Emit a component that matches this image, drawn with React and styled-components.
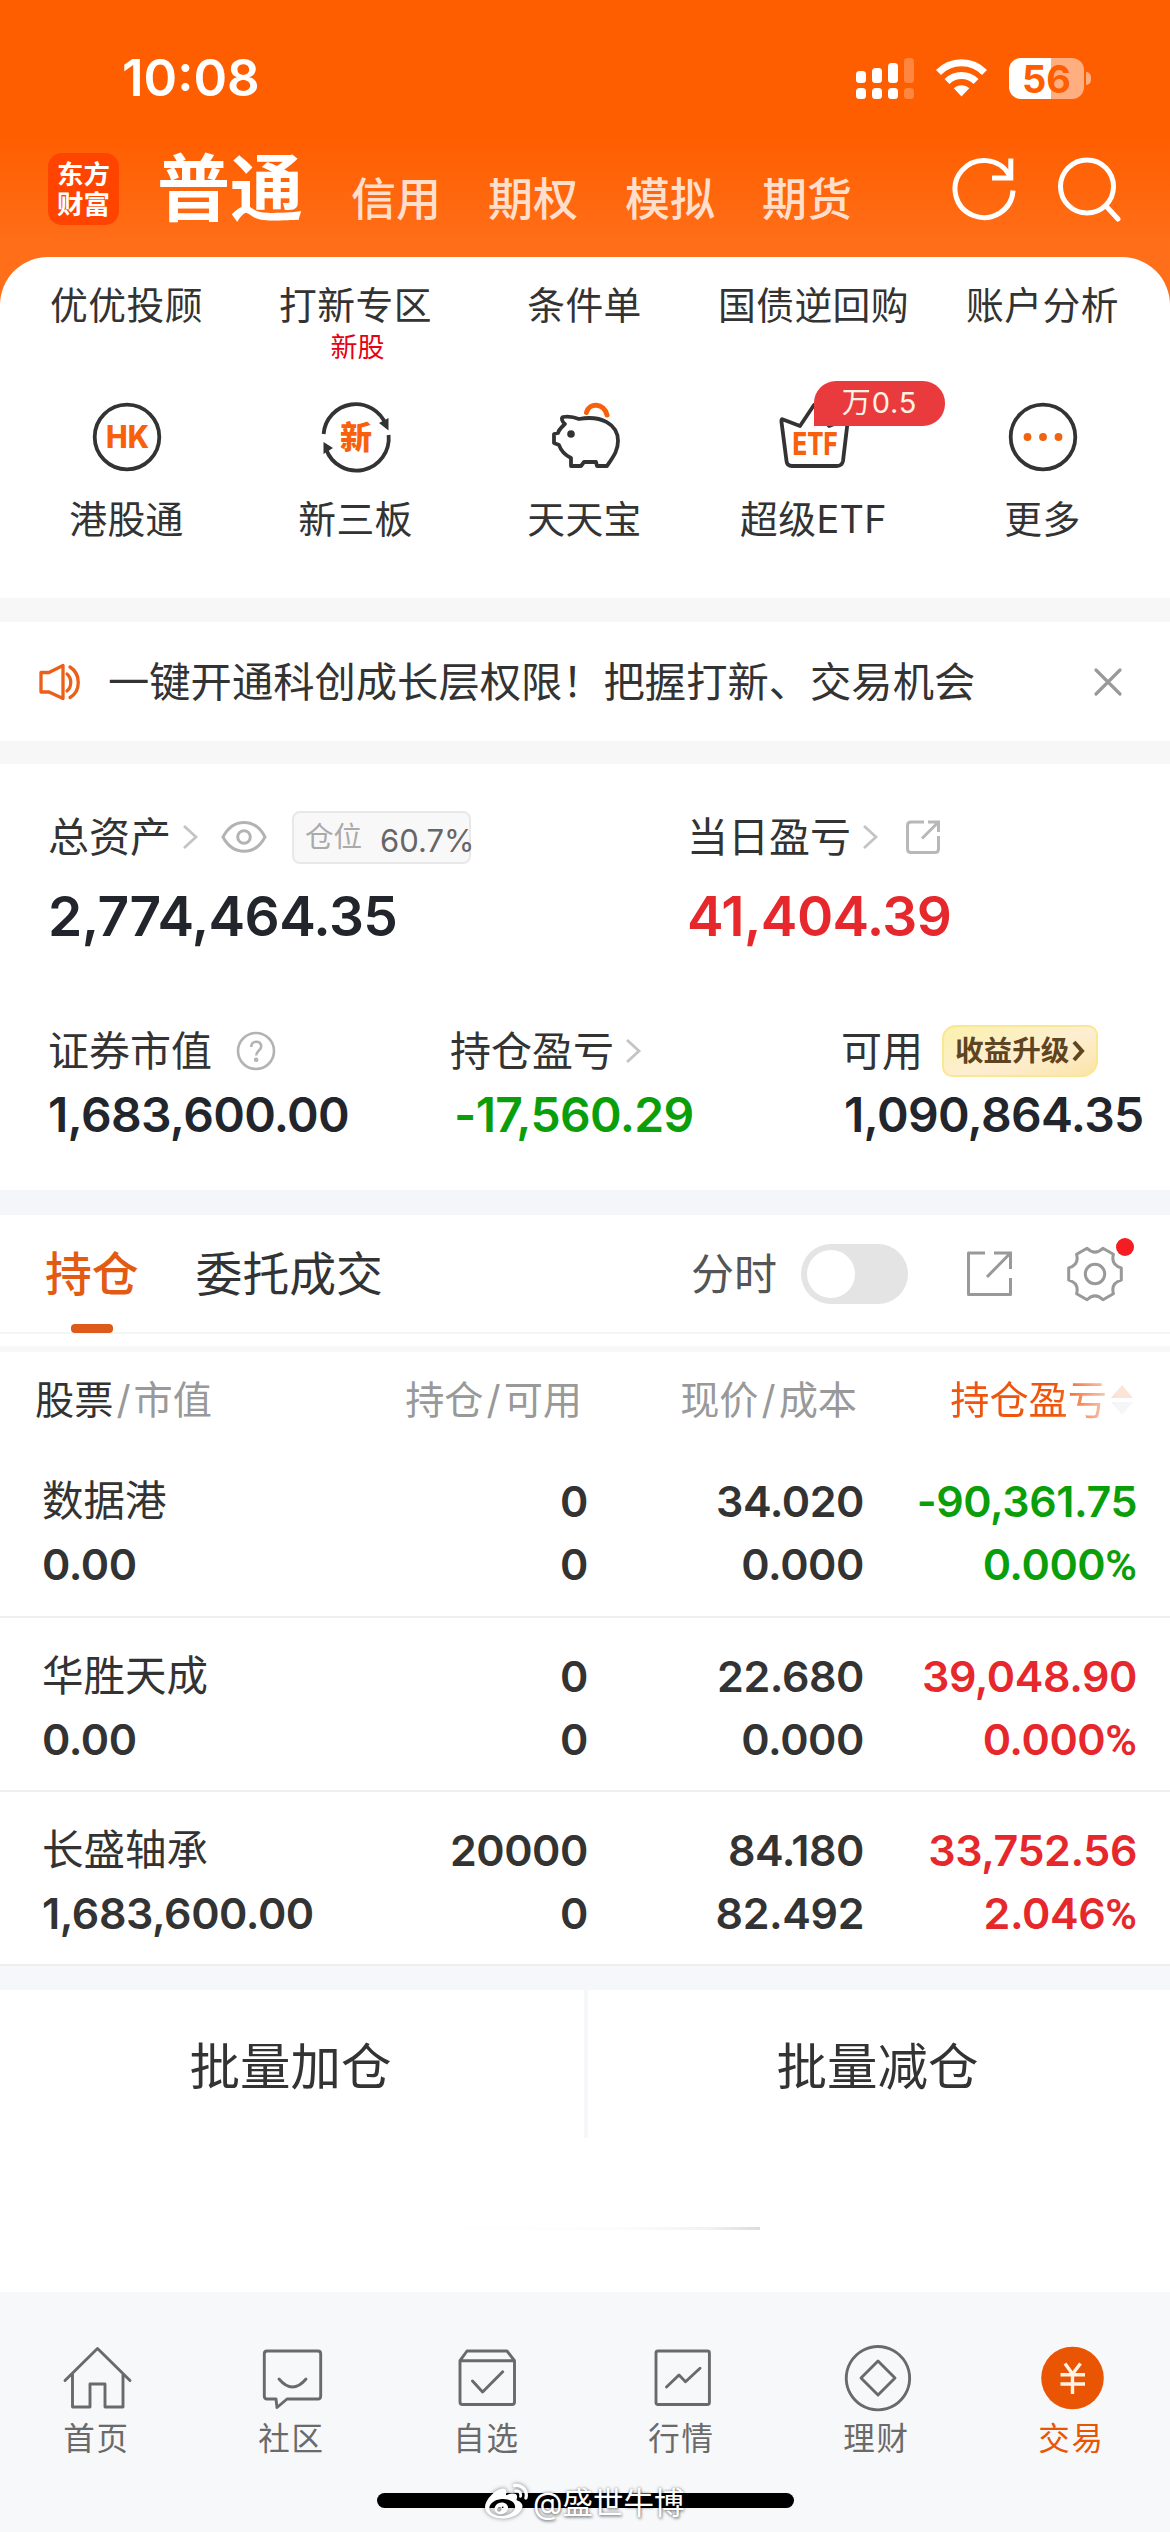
import React, { useState } from "react";
import styled, { createGlobalStyle } from "styled-components";
import { FaWeibo } from "react-icons/fa";

const GlobalStyle = createGlobalStyle`
  * {
    box-sizing: border-box;
  }
  body {
    margin: 0;
    background: #fff;
    color: #333;
    font-family: Inter, "Noto Sans CJK SC", sans-serif;
  }
  svg {
    display: block;
    flex-shrink: 0;
  }
`;

const Page = styled.div`
  position: relative;
  width: 1170px;
  height: 2532px;
  display: flex;
  flex-direction: column;
  overflow: hidden;
`;

const Top = styled.div`
  background: linear-gradient(#ff5e00 0, #ff5e00 136px, #ff6f1a 250px, #ff6f1a 320px);
`;

const StatusBar = styled.div`
  display: flex;
  align-items: center;
  height: 140px;
  padding: 16px 86px 0 122px;
  color: #fff;
`;

const Time = styled.div`
  flex: 1;
  font-size: 51px;
  font-weight: 600;
  line-height: 60px;
`;

const StatusIcons = styled.div`
  display: flex;
  align-items: center;
  gap: 21px;
`;

const Battery = styled.div`
  position: relative;
  width: 75px;
  height: 41px;
  margin-left: 1px;
  border-radius: 12px;
  background: linear-gradient(90deg, #fff 56%, #ffae80 56%);
  color: #ff5e00;
  font-size: 38px;
  font-weight: 700;
  line-height: 42px;
  text-align: center;
  &::after {
    content: "";
    position: absolute;
    left: 77px;
    top: 14px;
    width: 5px;
    height: 13px;
    border-radius: 0 6px 6px 0;
    background: #ffae80;
  }
`;

const NavBar = styled.div`
  display: flex;
  align-items: center;
  height: 117px;
  padding: 0 49px 19px 48px;
  color: #fff;
`;

const Logo = styled.div`
  width: 71px;
  height: 72px;
  padding-top: 6px;
  border-radius: 14px;
  background: #ff4400;
  font-size: 26.5px;
  font-weight: 700;
  line-height: 30px;
  text-align: center;
`;

const NavTitle = styled.div`
  margin-left: 38px;
  font-size: 73px;
  font-weight: 700;
  line-height: 80px;
`;

const NavTabs = styled.div`
  display: flex;
  flex: 1;
  gap: 47px;
  margin-left: 48px;
  padding-top: 22px;
  font-size: 45px;
  font-weight: 500;
  line-height: 50px;
  color: #ffdfcb;
`;

const NavActions = styled.div`
  display: flex;
  gap: 39px;
`;

const Card = styled.div`
  height: 341px;
  padding: 23px 12px 0;
  border-radius: 48px 48px 0 0;
  background: #fff;
`;

const MenuRow = styled.div`
  display: grid;
  grid-template-columns: repeat(5, 229px);
  min-height: ${(props) => props.$height}px;
`;

const MenuItem = styled.div`
  position: relative;
  display: flex;
  flex-direction: column;
  align-items: center;
`;

const MenuLabel = styled.div`
  font-size: 37.8px;
  letter-spacing: 0.4px;
  line-height: 50px;
  white-space: nowrap;
`;

const MenuHint = styled.div`
  padding: 1px 0 0 4px;
  font-size: 27px;
  line-height: 34px;
  color: #e60012;
`;

const IconBox = styled.div`
  height: 102px;
  svg text {
    font-weight: 800;
    fill: #f8600c;
    text-anchor: middle;
  }
`;

const Badge = styled.div`
  position: absolute;
  left: 115px;
  top: -11px;
  width: 131px;
  height: 45px;
  border-radius: 22px 22px 22px 0;
  background: #e93b3d;
  color: #fff3e6;
  font-size: 29px;
  letter-spacing: 0.8px;
  line-height: 44px;
  text-align: center;
`;

const Gap = styled.div`
  flex-shrink: 0;
  height: ${(props) => props.$height}px;
  background: ${(props) => props.$color || "#f7f7f7"};
`;

const Notice = styled.div`
  display: flex;
  align-items: center;
  height: 119px;
  padding: 0 47px 0 38px;
  font-size: 41.3px;
  line-height: 60px;
  white-space: nowrap;
`;

const NoticeText = styled.div`
  flex: 1;
  margin-left: 24px;
`;

const Assets = styled.div`
  height: 426px;
  padding: 48px 0 0 48px;
`;

const AssetRow = styled.div`
  display: grid;
  grid-template-columns: ${(props) => props.$columns};
  height: ${(props) => props.$height}px;
`;

const AssetLabel = styled.div`
  display: flex;
  align-items: center;
  height: 50px;
  font-size: 41px;
  line-height: 50px;
  white-space: nowrap;
`;

const colors = { up: "#e6282c", down: "#0a9f0a", dark: "#22252b" };

const Amount = styled.div`
  margin-top: ${(props) => (props.$big ? 24 : 14)}px;
  padding-left: ${(props) => props.$indent || 0}px;
  font-size: ${(props) => (props.$big ? 55 : 48)}px;
  font-weight: 600;
  letter-spacing: ${(props) => (props.$big ? "-0.011em" : "-0.014em")};
  line-height: ${(props) => (props.$big ? 60 : 50)}px;
  color: ${(props) => colors[props.$tone]};
`;

const Ratio = styled.div`
  display: flex;
  align-items: center;
  width: 179px;
  height: 53px;
  margin-left: 25px;
  padding-left: 11px;
  border: 2px solid #e8e8e8;
  border-radius: 8px;
  background: #f8f8f8;
  font-size: 28.5px;
  color: #aaa;
`;

const RatioValue = styled.span`
  margin: 8px 0 0 18px;
  font-size: 31px;
  color: #666;
`;

const Upgrade = styled.div`
  display: flex;
  align-items: center;
  gap: 3px;
  height: 52px;
  margin-left: 19px;
  padding: 0 11px;
  border: 2px solid #fae793;
  border-radius: 14px 10px 16px 10px;
  background: linear-gradient(160deg, #fbf1ab, #fdeed2 55%, #fbe4a8);
  color: #5e4420;
  font-size: 28.6px;
  font-weight: 700;
`;

const TabRow = styled.div`
  display: flex;
  align-items: center;
  height: 119px;
  padding: 0 47px 0 45px;
  border-bottom: 2px solid #f5f5f5;
  line-height: 60px;
`;

const Tab = styled.div`
  position: relative;
  margin-right: 57px;
  font-size: 46.8px;
  font-weight: ${(props) => (props.$active ? 500 : 400)};
  color: ${(props) => (props.$active ? "#e35a12" : "#333")};
  cursor: pointer;
  &::after {
    content: "";
    display: ${(props) => (props.$active ? "block" : "none")};
    position: absolute;
    left: 26px;
    bottom: -29px;
    width: 42px;
    height: 9px;
    border-radius: 4px;
    background: #dd5a1a;
  }
`;

const SwitchLabel = styled.div`
  margin-left: auto;
  font-size: 43px;
  color: #555;
`;

const Switch = styled.div`
  width: 107px;
  height: 60px;
  margin: 0 58px 0 24px;
  padding: 6px;
  border-radius: 30px;
  background: #e4e4e4;
  cursor: pointer;
  &::after {
    content: "";
    display: block;
    width: 48px;
    height: 48px;
    margin-left: ${(props) => (props.$on ? 47 : 0)}px;
    border-radius: 50%;
    background: #fff;
  }
`;

const Settings = styled.div`
  position: relative;
  margin-left: 54px;
  &::after {
    content: "";
    position: absolute;
    right: -11px;
    top: -8px;
    width: 18px;
    height: 18px;
    border-radius: 50%;
    background: #f51d22;
  }
`;

const TableHead = styled.div`
  display: grid;
  grid-template-columns: 266px 281px 275px 277px;
  align-items: center;
  height: 91px;
  padding: 4px 36px 0 35px;
  font-size: 39.2px;
  line-height: 50px;
  color: #999;
  white-space: nowrap;
`;

const HeadCell = styled.div`
  text-align: right;
  &:first-child {
    text-align: left;
  }
  b {
    font-weight: 400;
    color: #333;
  }
  i {
    font-style: normal;
    margin: 0 3px;
  }
`;

const SortCell = styled.div`
  display: flex;
  align-items: center;
  justify-content: flex-end;
  gap: 3px;
  color: #ee5610;
  mask-image: linear-gradient(90deg, #000 200px, rgba(0, 0, 0, 0.18) 260px);
`;

const StockRow = styled.div`
  display: grid;
  grid-template-columns: 258px 288px 276px 273px;
  height: ${(props) => props.$height}px;
  padding: 27px 33px 0 42px;
  border-bottom: 2px solid #efefef;
  font-size: 43px;
  font-weight: 600;
  letter-spacing: -0.01em;
  line-height: 63px;
  white-space: nowrap;
`;

const StockName = styled.div`
  font-size: 41.5px;
  font-weight: 400;
  letter-spacing: 0;
`;

const StockCell = styled.div`
  text-align: right;
  color: ${(props) => colors[props.$tone] || "#333"};
  &:first-child {
    text-align: left;
  }
`;

const Percent = styled.span`
  font-family: Roboto, sans-serif;
  letter-spacing: 0;
`;

const Actions = styled.div`
  display: grid;
  grid-template-columns: 584px 586px;
  height: 148px;
`;

const Action = styled.div`
  height: 148px;
  padding-right: 3px;
  font-size: 50.5px;
  line-height: 154px;
  text-align: center;
  border-left: 4px solid #f6f7fa;
  &:first-child {
    border-left: none;
  }
`;

const Blank = styled.div`
  height: 154px;
  padding: 89px 0 0 410px;
`;

const Hairline = styled.div`
  width: 350px;
  height: 3px;
  background: linear-gradient(90deg, #fff, #fcfcfc 60%, #f2f2f2 85%, #dcdcdc);
`;

const TabBar = styled.div`
  display: grid;
  grid-template-columns: repeat(6, 195px);
  height: 240px;
  padding-top: 46px;
  background: #f7f8fa;
`;

const TabItem = styled.div`
  display: flex;
  flex-direction: column;
  align-items: center;
  color: ${(props) => (props.$active ? "#ea5504" : "#6a6a6a")};
  line-height: 42px;
`;

const TabLabel = styled.div`
  margin-right: 2px;
  font-size: 31.5px;
  letter-spacing: 1.8px;
`;

const HomeIndicator = styled.div`
  position: absolute;
  left: 377px;
  bottom: 24px;
  width: 417px;
  height: 15px;
  border-radius: 8px;
  background: #000;
`;

const Watermark = styled.div`
  position: absolute;
  left: 485px;
  bottom: 8px;
  display: flex;
  align-items: center;
  gap: 5px;
  color: #fff;
  font-size: 30.5px;
  line-height: 40px;
  text-shadow: 0 0 3px rgba(0, 0, 0, 0.55), 1px 2px 3px rgba(0, 0, 0, 0.3);
  svg {
    filter: drop-shadow(0 0 2px rgba(0, 0, 0, 0.5));
  }
`;

const Signal = () => (
  <svg width="59" height="41" viewBox="0 0 59 41" fill="#fff">
    <rect x="0" y="13" width="10" height="12" rx="3.5" />
    <rect x="16" y="10" width="10" height="15" rx="3.5" />
    <rect x="32" y="5" width="10" height="20" rx="3.5" />
    <rect x="48" y="0" width="10" height="25" rx="3.5" opacity="0.25" />
    <rect x="0" y="30" width="10" height="11" rx="3.5" />
    <rect x="16" y="30" width="10" height="11" rx="3.5" />
    <rect x="32" y="30" width="10" height="11" rx="3.5" />
    <rect x="48" y="30" width="10" height="11" rx="3.5" opacity="0.25" />
  </svg>
);

const Wifi = () => (
  <svg width="51" height="38" viewBox="0 0 51 38" fill="none" stroke="#fff" strokeWidth="7">
    <path d="M2.5 13.5 C15 0.5 36 0.5 48.5 13.5" />
    <path d="M11 22.5 C19 14.5 32 14.5 40 22.5" />
    <path d="M25.5 37.5 L17.8 29.2 C22 25.2 29 25.2 33.2 29.2 Z" fill="#fff" stroke="none" />
  </svg>
);

const Refresh = () => (
  <svg width="66" height="66" viewBox="0 0 66 66" fill="none" stroke="#fff" strokeWidth="5">
    <path d="M61 34.5 A29 28.5 0 1 1 57 18.5 L58.5 22" />
    <path d="M58.8 2.5 V22 H40" />
  </svg>
);

const Search = () => (
  <svg width="64" height="66" viewBox="0 0 64 66" fill="none" stroke="#fff" strokeWidth="5">
    <ellipse cx="30" cy="30.5" rx="26.5" ry="26.5" />
    <path d="M49 50 L61 63" strokeLinecap="round" />
  </svg>
);

const HkIcon = () => (
  <svg width="90" height="90" viewBox="0 0 90 90">
    <circle cx="45" cy="45" r="32.3" fill="none" stroke="#333" strokeWidth="3.8" />
    <text x="45.5" y="56.3" fontSize="31" textLength="43" lengthAdjust="spacingAndGlyphs">HK</text>
  </svg>
);

const NewBoardIcon = () => (
  <svg width="90" height="90" viewBox="0 0 90 90">
    <g fill="none" stroke="#333" strokeWidth="3.8">
      <path d="M12.6 42 A32.3 32.3 0 0 1 75 33" />
      <path d="M77.6 43 A32.3 32.3 0 0 1 15 57" />
    </g>
    <path d="M77.5 26 V38.5 L68 31 Z M12.5 50 V62 L22 56 Z" fill="#333" />
    <text x="45" y="56.5" fontSize="32">新</text>
  </svg>
);

const PigIcon = () => (
  <svg width="90" height="90" viewBox="-1 2 90 90" fill="none" stroke="#333" strokeWidth="3.8" strokeLinejoin="round">
    <path d="M22 27 C28 26 33 27 38 29 C60 25 77 34 77 51 C77 61 72 67 66 76 H56 L55 72 H43 L40 76 H30 V68 C24 65 20 61 18 55 L13 53 V44 L17 43 C18 39 21 37 24 34 C21 32 20 28 22 27 Z" />
    <circle cx="30" cy="44" r="3.8" fill="#333" stroke="none" />
    <path d="M45.5 22.5 C48 12.5 63 12.5 66 25" stroke="#f8600c" strokeWidth="5" strokeLinecap="round" />
  </svg>
);

const EtfIcon = () => (
  <svg width="90" height="90" viewBox="0 0 90 90">
    <path
      d="M14 27.5 L31 34 L45 13 L60 34 L79 27 L74 69 Q73 74 68 74 H23 Q18 74 17.5 69 L12.5 30 Q12 26.5 14 27.5 Z"
      fill="none"
      stroke="#333"
      strokeWidth="3.8"
      strokeLinejoin="round"
    />
    <text x="46" y="63" fontSize="31" textLength="45" lengthAdjust="spacingAndGlyphs">ETF</text>
  </svg>
);

const MoreIcon = () => (
  <svg width="90" height="90" viewBox="0 0 90 90">
    <circle cx="45" cy="45" r="32.3" fill="none" stroke="#333" strokeWidth="3.8" />
    <g fill="#f0640f">
      <circle cx="29.5" cy="45" r="3.9" />
      <circle cx="45" cy="45" r="3.9" />
      <circle cx="60.5" cy="45" r="3.9" />
    </g>
  </svg>
);

const Speaker = () => (
  <svg width="46" height="42" viewBox="0 0 46 42" fill="none" stroke="#ec5f17" strokeWidth="3.3" strokeLinejoin="round">
    <path d="M3 11.5 H11 L25 4.5 V37.5 L11 31 H3 Z" />
    <path d="M29 13 C34 17 34 26 29 30" strokeLinecap="round" />
    <path d="M32 6 C43 13 43 30 32 36.5" strokeLinecap="round" />
  </svg>
);

const Close = () => (
  <svg width="30" height="30" viewBox="0 0 30 30" stroke="#999" strokeWidth="3.2" strokeLinecap="round">
    <path d="M3 3 L27 27 M27 3 L3 27" />
  </svg>
);

const ChevronSvg = styled.svg`
  margin-left: 11px;
`;

const Chevron = () => (
  <ChevronSvg width="17" height="26" viewBox="0 0 17 26" fill="none" stroke="#c4c4c4" strokeWidth="2.8">
    <path d="M2 2 L14 13 L2 24" />
  </ChevronSvg>
);

const LabelIcon = styled.svg`
  margin-left: ${(props) => props.$left}px;
`;

const Eye = () => (
  <LabelIcon $left={22} width="46" height="34" viewBox="0 0 46 34" fill="none" stroke="#b3b3b3" strokeWidth="3">
    <path d="M2 17 C12 -2.5 34 -2.5 44 17 C34 36 12 36 2 17 Z" />
    <circle cx="23" cy="17" r="6.3" />
  </LabelIcon>
);

const ShareSmall = () => (
  <LabelIcon $left={26} width="36" height="36" viewBox="0 0 36 36" fill="none" stroke="#b8b8b8" strokeWidth="3">
    <path d="M19 3 H6 Q2.5 3 2.5 6.5 V30 Q2.5 33.5 6 33.5 H30 Q33.5 33.5 33.5 30 V17" />
    <path d="M23 3 H33.5 V13 M33 3.5 L17 19.5" />
  </LabelIcon>
);

const Share = () => (
  <svg width="47" height="47" viewBox="0 0 47 47" fill="none" stroke="#999" strokeWidth="3">
    <path d="M19 3 H2.5 V44.5 H44.5 V28" strokeLinejoin="round" />
    <path d="M28 3 H44.5 V19 M44 3.5 L21 27" />
  </svg>
);

const Help = () => (
  <LabelIcon $left={24} width="40" height="40" viewBox="0 0 40 40" fill="none" stroke="#b3b3b3" strokeWidth="2.6">
    <circle cx="20" cy="20" r="18" />
    <path d="M15.2 16 C15.2 9 25.2 9 25.2 15.5 C25.2 19.5 20.2 19.5 20.2 24.5" />
    <circle cx="20.2" cy="28.8" r="1" />
  </LabelIcon>
);

// six rounded teeth around a centre of 30,30
const gearPath = () => {
  const at = (r, deg) => {
    const a = (deg * Math.PI) / 180;
    return `${(30 + r * Math.cos(a)).toFixed(1)} ${(30 + r * Math.sin(a)).toFixed(1)}`;
  };
  let d = `M${at(27, -13)}`;
  for (let k = 0; k < 6; k++) {
    const t = k * 60;
    d += ` L${at(27, t + 13)} Q${at(18, t + 30)} ${at(27, t + 47)}`;
  }
  return d + " Z";
};

const Gear = () => (
  <svg width="56" height="56" viewBox="2 2 56 56" fill="none" stroke="#999" strokeWidth="3" strokeLinejoin="round">
    <path d={gearPath()} />
    <circle cx="30" cy="30" r="9.7" />
  </svg>
);

const SortArrows = () => (
  <svg width="24" height="32" viewBox="0 0 24 32">
    <path d="M12 1 L23 14 H1 Z" fill="#f06a2a" />
    <path d="M12 31 L23 18 H1 Z" fill="#c9ccd2" />
  </svg>
);

const MiniChevron = () => (
  <svg width="13" height="22" viewBox="0 0 13 22" fill="none" stroke="#5e4420" strokeWidth="4">
    <path d="M2 2 L10 11 L2 20" />
  </svg>
);

const TabIcon = ({ children }) => (
  <svg
    width="80"
    height="80"
    viewBox="0 0 80 80"
    fill="none"
    stroke="currentColor"
    strokeWidth="2.9"
    strokeLinejoin="round"
    strokeLinecap="round"
  >
    {children}
  </svg>
);

const services = ["优优投顾", "打新专区", "条件单", "国债逆回购", "账户分析"];

const tools = [
  { label: "港股通", icon: <HkIcon /> },
  { label: "新三板", icon: <NewBoardIcon /> },
  { label: "天天宝", icon: <PigIcon /> },
  { label: "超级ETF", icon: <EtfIcon />, badge: "万0.5" },
  { label: "更多", icon: <MoreIcon /> },
];

const stocks = [
  { name: "数据港", value: "0.00", hold: "0", usable: "0", price: "34.020", cost: "0.000", profit: "-90,361.75", rate: "0.000", tone: "down", height: 175 },
  { name: "华胜天成", value: "0.00", hold: "0", usable: "0", price: "22.680", cost: "0.000", profit: "39,048.90", rate: "0.000", tone: "up", height: 174 },
  { name: "长盛轴承", value: "1,683,600.00", hold: "20000", usable: "0", price: "84.180", cost: "82.492", profit: "33,752.56", rate: "2.046", tone: "up", height: 174 },
];

const tabs = [
  {
    label: "首页",
    icon: <path d="M7 42.5 L39.5 10.5 L72 42.5 M14.5 36 V69 H32 V46 H47 V69 H65 V36" />,
  },
  {
    label: "社区",
    icon: <path d="M14 13 H65 Q67.7 13 67.7 16 V58 Q67.7 61 65 61 H34 L24 69.5 L23 61 H14 Q11.3 61 11.3 58 V16 Q11.3 13 14 13 Z M26 41 Q39.5 57 53 41" />,
  },
  {
    label: "自选",
    icon: <path d="M12 22.7 L19 13 H59 L66.5 22.7 V64 Q66.5 66.5 64 66.5 H14.5 Q12 66.5 12 64 Z H66.5 M24.5 43 L34.6 54 L54.7 33.7" />,
  },
  {
    label: "行情",
    icon: <path d="M15 13 H64.4 Q66.4 13 66.4 15 V64.5 Q66.4 66.5 64.4 66.5 H15 Q13 66.5 13 64.5 V15 Q13 13 15 13 Z M23.5 49 L36 37 L42.5 43.7 L57 30.3" />,
  },
  {
    label: "理财",
    icon: <path d="M40 8.5 A31.7 31.7 0 1 1 39.9 8.5 Z M40 23 L57 40 L40 57 L23 40 Z" />,
  },
  {
    label: "交易",
    active: true,
    icon: (
      <>
        <circle cx="39.5" cy="40" r="31.3" fill="#ea5504" stroke="none" />
        <path d="M32 25.5 L39.5 36 L47.5 25.5 M39.5 36 V56 M27.5 36.7 H52 M27.5 46 H52" stroke="#fff3e6" strokeWidth="3.4" strokeLinecap="butt" />
      </>
    ),
  },
];

const App = () => {
  const [activeTab, setActiveTab] = useState("持仓");
  const [minuteChart, setMinuteChart] = useState(false);

  return (
    <Page>
      <GlobalStyle />
      <Top>
        <StatusBar>
          <Time>10:08</Time>
          <StatusIcons>
            <Signal />
            <Wifi />
            <Battery>56</Battery>
          </StatusIcons>
        </StatusBar>
        <NavBar>
          <Logo>东方<br />财富</Logo>
          <NavTitle>普通</NavTitle>
          <NavTabs>
            <span>信用</span>
            <span>期权</span>
            <span>模拟</span>
            <span>期货</span>
          </NavTabs>
          <NavActions>
            <Refresh />
            <Search />
          </NavActions>
        </NavBar>
        <Card>
          <MenuRow $height={112}>
            {services.map((label) => (
              <MenuItem key={label}>
                <MenuLabel>{label}</MenuLabel>
                {label === "打新专区" && <MenuHint>新股</MenuHint>}
              </MenuItem>
            ))}
          </MenuRow>
          <MenuRow $height={152}>
            {tools.map((tool) => (
              <MenuItem key={tool.label}>
                <IconBox>{tool.icon}</IconBox>
                <MenuLabel>{tool.label}</MenuLabel>
                {tool.badge && <Badge>{tool.badge}</Badge>}
              </MenuItem>
            ))}
          </MenuRow>
        </Card>
      </Top>

      <Gap $height={24} />
      <Notice>
        <Speaker />
        <NoticeText>一键开通科创成长层权限！把握打新、交易机会</NoticeText>
        <Close />
      </Notice>
      <Gap $height={23} />

      <Assets>
        <AssetRow $columns="639px 1fr" $height={214}>
          <div>
            <AssetLabel>
              总资产
              <Chevron />
              <Eye />
              <Ratio>
                仓位<RatioValue>60.7%</RatioValue>
              </Ratio>
            </AssetLabel>
            <Amount $big $tone="dark">2,774,464.35</Amount>
          </div>
          <div>
            <AssetLabel>
              当日盈亏
              <Chevron />
              <ShareSmall />
            </AssetLabel>
            <Amount $big $tone="up">41,404.39</Amount>
          </div>
        </AssetRow>
        <AssetRow $columns="402px 391px 1fr" $height={164}>
          <div>
            <AssetLabel>
              证券市值
              <Help />
            </AssetLabel>
            <Amount $tone="dark">1,683,600.00</Amount>
          </div>
          <div>
            <AssetLabel>
              持仓盈亏
              <Chevron />
            </AssetLabel>
            <Amount $tone="down" $indent={4}>-17,560.29</Amount>
          </div>
          <div>
            <AssetLabel>
              可用
              <Upgrade>
                收益升级
                <MiniChevron />
              </Upgrade>
            </AssetLabel>
            <Amount $tone="dark" $indent={3}>1,090,864.35</Amount>
          </div>
        </AssetRow>
      </Assets>

      <Gap $height={25} $color="#f5f6f9" />
      <TabRow>
        {["持仓", "委托成交"].map((name) => (
          <Tab key={name} $active={activeTab === name} onClick={() => setActiveTab(name)}>
            {name}
          </Tab>
        ))}
        <SwitchLabel>分时</SwitchLabel>
        <Switch $on={minuteChart} onClick={() => setMinuteChart(!minuteChart)} />
        <Share />
        <Settings>
          <Gear />
        </Settings>
      </TabRow>
      <Gap $height={12} $color="#fff" />
      <Gap $height={6} $color="#f8f8f9" />

      <TableHead>
        <HeadCell>
          <b>股票</b>
          <i>/</i>市值
        </HeadCell>
        <HeadCell>
          持仓<i>/</i>可用
        </HeadCell>
        <HeadCell>
          现价<i>/</i>成本
        </HeadCell>
        <SortCell>
          持仓盈亏
          <SortArrows />
        </SortCell>
      </TableHead>
      {stocks.map((s) => (
        <StockRow key={s.name} $height={s.height}>
          <StockCell>
            <StockName>{s.name}</StockName>
            {s.value}
          </StockCell>
          <StockCell>
            {s.hold}
            <br />
            {s.usable}
          </StockCell>
          <StockCell>
            {s.price}
            <br />
            {s.cost}
          </StockCell>
          <StockCell $tone={s.tone}>
            {s.profit}
            <br />
            {s.rate}
            <Percent>%</Percent>
          </StockCell>
        </StockRow>
      ))}
      <Gap $height={24} $color="#f6f7fa" />

      <Actions>
        <Action>批量加仓</Action>
        <Action>批量减仓</Action>
      </Actions>
      <Blank>
        <Hairline />
      </Blank>

      <TabBar>
        {tabs.map((tab) => (
          <TabItem key={tab.label} $active={tab.active}>
            <TabIcon>{tab.icon}</TabIcon>
            <TabLabel>{tab.label}</TabLabel>
          </TabItem>
        ))}
      </TabBar>
      <HomeIndicator />
      <Watermark>
        <FaWeibo size={43} />
        @盛世牛博
      </Watermark>
    </Page>
  );
};

export default App;
